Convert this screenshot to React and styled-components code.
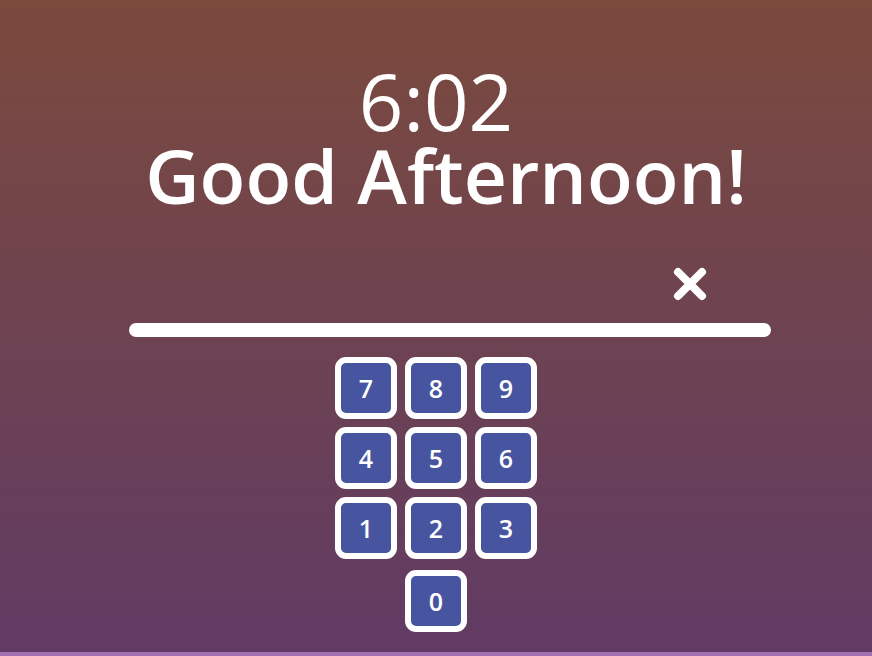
import styled, { createGlobalStyle } from "styled-components";

const GlobalStyle = createGlobalStyle`
  html, body {
    margin: 0;
    padding: 0;
    background: #a06fb4;
    font-family: "Open Sans", "Noto Sans", sans-serif;
  }
`;

const keys = ["7", "8", "9", "4", "5", "6", "1", "2", "3"];

const App = () => {
  return (
    <>
      <GlobalStyle />
      <Wrapper>
        <Clock>6:02</Clock>
        <Greeting>Good Afternoon!</Greeting>
        <InputRow>
          <ClearButton aria-label="clear">
            <svg width="34" height="34" viewBox="0 0 34 34">
              <path
                d="M5 5 L29 29 M29 5 L5 29"
                stroke="#fff"
                strokeWidth="8"
                strokeLinecap="round"
              />
            </svg>
          </ClearButton>
          <Bar />
        </InputRow>
        <Keypad>
          {keys.map((k) => (
            <Key key={k}>{k}</Key>
          ))}
          <Key $zero>0</Key>
        </Keypad>
      </Wrapper>
    </>
  );
};
export default App;

const Wrapper = styled.div`
  height: 652px;
  background: linear-gradient(180deg, #7b4a3d 0%, #613b64 100%);
  display: flex;
  flex-direction: column;
  align-items: center;
  padding-top: 64px;
  box-sizing: border-box;
  color: #fff;
`;

const Clock = styled.h1`
  margin: 0;
  font-size: 78px;
  font-weight: 500;
  line-height: 74px;
`;

const Greeting = styled.h2`
  margin: 0;
  font-size: 75px;
  font-weight: 600;
  line-height: 74px;
  padding-left: 20px;
`;

const InputRow = styled.div`
  width: 642px;
  margin-left: 28px;
  margin-top: 55px;
  display: flex;
  flex-direction: column;
  align-items: flex-end;
`;

const ClearButton = styled.button`
  border: none;
  background: none;
  padding: 0;
  margin-right: 64px;
  cursor: pointer;
  display: flex;
  svg {
    display: block;
  }
`;

const Bar = styled.div`
  width: 100%;
  height: 14px;
  margin-top: 22px;
  border-radius: 7px;
  background: #fff;
`;

const Keypad = styled.div`
  margin-top: 20px;
  display: grid;
  grid-template-columns: repeat(3, 62px);
  grid-auto-rows: 62px;
  column-gap: 8px;
  row-gap: 8px;
`;

const Key = styled.button`
  box-sizing: border-box;
  width: 62px;
  height: 62px;
  border: 6px solid #fff;
  border-radius: 11px;
  background: #4755a1;
  color: #fff;
  font-family: "Open Sans", "Noto Sans", sans-serif;
  font-size: 25px;
  font-weight: 600;
  padding: 0;
  cursor: pointer;
  grid-column: ${(p) => (p.$zero ? "2" : "auto")};
  margin-top: ${(p) => (p.$zero ? "3px" : "0")};
`;
